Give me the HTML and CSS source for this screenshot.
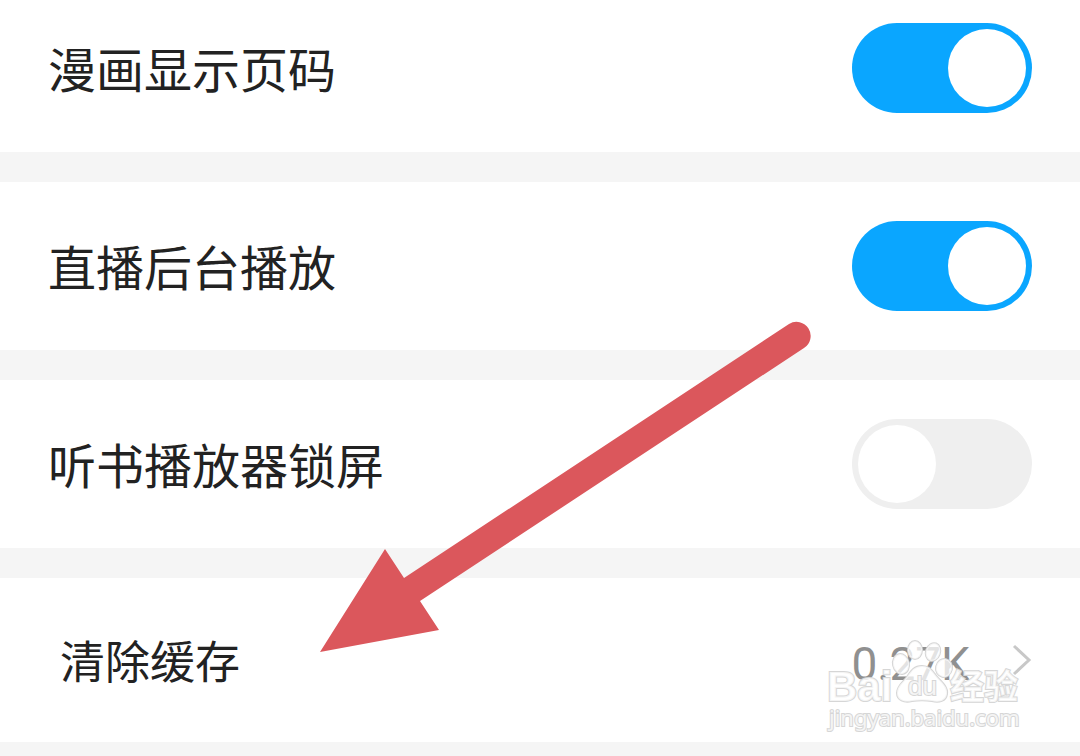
FILE: index.html
```html
<!DOCTYPE html>
<html lang="zh-CN">
<head>
    <meta charset="UTF-8">
    <meta name="viewport" content="width=device-width, initial-scale=1.0">
    <title>设置</title>
    <link rel="stylesheet" href="styles.css">
</head>
<body>

<main class="settings">
    <div class="row row-first">
        <label class="label" for="comic-page">漫画显示页码</label>
        <input class="switch" type="checkbox" id="comic-page" checked>
    </div>
    <div class="row">
        <label class="label" for="live-background">直播后台播放</label>
        <input class="switch" type="checkbox" id="live-background" checked>
    </div>
    <div class="row">
        <label class="label" for="audio-lock">听书播放器锁屏</label>
        <input class="switch" type="checkbox" id="audio-lock">
    </div>
    <button class="row row-cache" type="button">
        <span class="label label-cache">清除缓存</span>
        <span class="size">0.27K</span>
        <svg class="chevron" viewBox="0 0 20 32" aria-hidden="true">
            <path d="M2 2 L17 16 L2 30"/>
        </svg>
    </button>

    <!-- arrow pointing at the cache row -->
    <svg class="arrow" viewBox="0 0 492 332" aria-hidden="true">
        <path d="M0 332 L65 229 L84 258 L469 4 A14 14 0 0 1 484 28 L100 281 L119 310 Z"/>
    </svg>

    <!-- watermark -->
    <svg class="watermark" viewBox="0 0 200 104" aria-hidden="true">
        <g class="mark">
            <ellipse cx="77" cy="34" rx="8" ry="10" transform="rotate(-12 77 34)"/>
            <ellipse cx="91" cy="20" rx="7" ry="9"/>
            <ellipse cx="109" cy="22" rx="7" ry="9" transform="rotate(20 109 22)"/>
            <ellipse cx="120" cy="38" rx="8" ry="9" transform="rotate(12 120 38)"/>
            <path d="M98 36 C107 36 109 43 114 48 C119 53 124 58 123 64 C122 71 115 73 108 71 C101 70 95 70 88 71 C80 73 73 70 73 63 C73 56 79 52 83 47 C87 41 90 36 98 36 Z"/>
            <text class="brand" x="3" y="71">Bai</text>
            <text class="paw-text" x="84" y="65">du</text>
            <text class="brand-cn" x="126" y="69">经验</text>
            <text class="site" x="5" y="96">jingyan.baidu.com</text>
        </g>
    </svg>
</main>

</body>
</html>
```
FILE: styles.css
```css
body {
    margin: 0;
    background-color: #f5f5f5;
    color: #222;
    font-family: Roboto, "Noto Sans CJK SC", sans-serif;
    overflow: hidden;
}
.settings {
    position: relative;
    display: flex;
    flex-direction: column;
    gap: 30px;
}
.row {
    display: flex;
    align-items: center;
    box-sizing: border-box;
    width: 100%;
    padding: 39px 48px;
    border: none;
    background-color: #fff;
    color: inherit;
    font-family: inherit;
    text-align: left;
}
.row-first {
    padding-top: 23px;
}
.label {
    flex: 1;
    padding-top: 8px;
    font-size: 48px;
    line-height: 72px;
}
.switch {
    appearance: none;
    display: flex;
    box-sizing: border-box;
    width: 180px;
    height: 90px;
    margin: 0;
    padding: 6px;
    border-radius: 45px;
    background-color: #efefef;
    cursor: pointer;
}
.switch::before {
    content: "";
    width: 78px;
    height: 78px;
    border-radius: 50%;
    background-color: #fff;
}
.switch:checked {
    justify-content: flex-end;
    background-color: #0aa6ff;
}
.row-cache {
    padding: 42px 48px;
    cursor: pointer;
}
.label-cache {
    padding-left: 12px;
    font-size: 45px;
}
.size {
    padding-top: 8px;
    color: #909090;
    font-size: 46px;
}
.chevron {
    width: 20px;
    height: 32px;
    margin-left: 42px;
    fill: none;
    stroke: #c8c8c8;
    stroke-width: 3;
}
.arrow {
    position: absolute;
    top: 320px;
    left: 320px;
    width: 492px;
    height: 332px;
    fill: #db575c;
    pointer-events: none;
}
.watermark {
    position: absolute;
    right: 56px;
    bottom: 8px;
    width: 200px;
    height: 104px;
    overflow: visible;
    pointer-events: none;
}
.mark {
    fill: rgba(255, 255, 255, 0.75);
    stroke: #d6d6d6;
    stroke-width: 2;
    paint-order: stroke;
}
.brand {
    font: bold 42px "Liberation Sans", sans-serif;
}
.paw-text {
    font: 26px "Liberation Sans", sans-serif;
}
.brand-cn {
    font: bold 34px "Noto Sans CJK SC", sans-serif;
}
.site {
    font: 22px "Noto Sans", sans-serif;
}
```
